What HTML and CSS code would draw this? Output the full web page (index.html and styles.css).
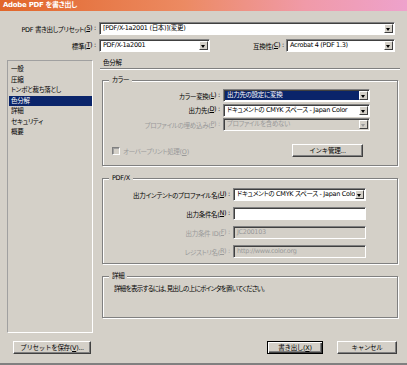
FILE: index.html
```html
<!DOCTYPE html>
<html lang="ja">

<head>
    <meta charset="UTF-8">
    <title>Adobe PDF を書き出し</title>
    <link rel="stylesheet" href="styles.css">
</head>

<body>
    <div class="dialog">
        <div class="titlebar">Adobe PDF を書き出し</div>

        <div class="top-row first">
            <span class="top-label">PDF 書き出しプリセット(<u>S</u>) :</span>
            <div class="select preset"><span class="val">[PDF/X-1a2001 (日本)](変更)</span><span class="drop"></span></div>
        </div>
        <div class="top-row">
            <span class="top-label">標準(<u>T</u>) :</span>
            <div class="select standard"><span class="val">PDF/X-1a2001</span><span class="drop"></span></div>
            <span class="compat-label">互換性(<u>C</u>) :</span>
            <div class="select compat"><span class="val">Acrobat 4 (PDF 1.3)</span><span class="drop"></span></div>
        </div>

        <div class="body">
            <ul class="nav">
                <li>一般</li>
                <li>圧縮</li>
                <li>トンボと裁ち落とし</li>
                <li class="active">色分解</li>
                <li>詳細</li>
                <li>セキュリティ</li>
                <li>概要</li>
            </ul>

            <div class="pane">
                <div class="pane-title">色分解</div>

                <!-- カラー -->
                <div class="group color">
                    <span class="legend">カラー</span>
                    <div class="field">
                        <span class="label">カラー変換(<u>L</u>) :</span>
                        <div class="select"><span class="val selected">出力先の設定に変換</span><span class="drop"></span></div>
                    </div>
                    <div class="field">
                        <span class="label">出力先(<u>D</u>) :</span>
                        <div class="select"><span class="val">ドキュメントの CMYK スペース - Japan Color</span><span class="drop"></span></div>
                    </div>
                    <div class="field disabled">
                        <span class="label">プロファイルの埋め込み(<u>P</u>) :</span>
                        <div class="select"><span class="val">プロファイルを含めない</span><span class="drop"></span></div>
                    </div>
                    <div class="check-row">
                        <span class="checkbox"></span>
                        <span class="check-label">オーバープリント処理(<u>O</u>)</span>
                        <button class="btn ink">インキ管理...</button>
                    </div>
                </div>

                <!-- PDF/X -->
                <div class="group pdfx">
                    <span class="legend">PDF/X</span>
                    <div class="field">
                        <span class="label">出力インテントのプロファイル名(<u>U</u>) :</span>
                        <div class="select"><span class="val">ドキュメントの CMYK スペース - Japan Color</span><span class="drop"></span></div>
                    </div>
                    <div class="field">
                        <span class="label">出力条件名(<u>N</u>) :</span>
                        <div class="select"><span class="val"></span></div>
                    </div>
                    <div class="field disabled">
                        <span class="label">出力条件 ID(<u>F</u>) :</span>
                        <div class="select"><span class="val">JC200103</span></div>
                    </div>
                    <div class="field disabled">
                        <span class="label">レジストリ名(<u>R</u>) :</span>
                        <div class="select"><span class="val">http://www.color.org</span></div>
                    </div>
                </div>

                <!-- 詳細 -->
                <div class="group info">
                    <span class="legend">詳細</span>
                    <p>詳細を表示するには、見出しの上にポインタを置いてください。</p>
                </div>
            </div>
        </div>

        <div class="footer">
            <button class="btn save">プリセットを保存(<u>V</u>)...</button>
            <span class="spacer"></span>
            <button class="btn default">書き出し(<u>X</u>)</button>
            <button class="btn cancel">キャンセル</button>
        </div>
    </div>
</body>

</html>
```

FILE: styles.css
```css
/* Reset */
body,
ul,
p {
    margin: 0;
    padding: 0;
}

body {
    background-color: #d4d0c8;
    color: #000;
    font-family: 'DejaVu Sans', 'Noto Sans CJK JP', sans-serif;
    font-size: 6.5px;
    letter-spacing: -0.3px;
    font-feature-settings: "palt";
}

.dialog {
    width: 407px;
    height: 365px;
    box-sizing: border-box;
    border-bottom: 2px solid #808080;
    overflow: hidden;
}

/* Title bar */
.titlebar {
    height: 11px;
    line-height: 11px;
    padding-left: 3px;
    color: #fff;
    font-size: 7px;
    font-weight: bold;
    background: linear-gradient(90deg, #e1662a 0%, #ec8a62 45%, #f09aa8 75%, #eea2cc 100%);
}

/* Preset / standard rows */
.top-row {
    display: flex;
    align-items: center;
    height: 13px;
    margin-top: 4px;
}

.top-row.first {
    margin-top: 11px;
}

.top-label,
.compat-label,
.field .label {
    display: flex;
    justify-content: flex-end;
    flex-shrink: 0;
    white-space: nowrap;
}

.top-label {
    width: 96px;
    margin-right: 3px;
}

.compat-label {
    width: 74px;
    margin-right: 2px;
}

.preset {
    width: 296px;
}

.standard {
    width: 111px;
}

.compat {
    width: 109px;
}

/* Sunken select / text box */
.select {
    display: flex;
    flex-shrink: 0;
    height: 13px;
    box-sizing: border-box;
    padding: 1px;
    background-color: #fff;
    border: 1px solid;
    border-color: #808080 #fff #fff #808080;
    box-shadow: inset 1px 1px 0 #404040;
}

.select .val {
    flex: 1;
    padding-left: 2px;
    line-height: 9px;
    white-space: nowrap;
    overflow: hidden;
}

.select .val.selected {
    background-color: #0a246a;
    color: #fff;
}

.select .drop {
    position: relative;
    width: 7px;
    background-color: #d4d0c8;
    border: 1px solid;
    border-color: #fff #404040 #404040 #fff;
}

.select .drop::after {
    content: "";
    position: absolute;
    left: 1px;
    top: 3px;
    border-left: 2.5px solid transparent;
    border-right: 2.5px solid transparent;
    border-top: 3px solid #000;
}

.disabled {
    color: #9a9a9a;
}

.disabled .select {
    background-color: #d4d0c8;
}

.disabled .select .drop::after {
    border-top-color: #9a9a9a;
}

/* Main area */
.body {
    display: flex;
    margin-top: 6px;
}

.nav {
    list-style-type: none;
    width: 86px;
    height: 273px;
    box-sizing: border-box;
    margin: 2px 0 0 7px;
    padding-top: 3px;
    border: 1px solid;
    border-color: #a0a0a0 #fff #fff #a0a0a0;
}

.nav li {
    height: 10.5px;
    line-height: 10.5px;
    margin-left: 1px;
    padding-left: 2px;
    white-space: nowrap;
}

.nav li.active {
    background-color: #0a246a;
    color: #fff;
}

.pane {
    width: 300px;
    margin-left: 7px;
}

.pane-title {
    height: 10px;
    line-height: 10px;
    padding-left: 3px;
    border-bottom: 1px solid #808080;
    box-shadow: 0 1px 0 #fff;
}

/* Etched group box */
.group {
    position: relative;
    margin: 11px 0 0 2px;
    width: 296px;
    box-sizing: border-box;
    border: 1px solid #808080;
    box-shadow: inset 1px 1px 0 #fff, 1px 1px 0 #fff;
}

.legend {
    position: absolute;
    top: -6px;
    left: 6px;
    padding: 0 3px;
    line-height: 10px;
    background-color: #d4d0c8;
}

.field {
    display: flex;
    align-items: center;
    height: 13px;
}

.field .label {
    margin-right: 3px;
}

.color {
    height: 86px;
    padding-top: 8px;
}

.color .field {
    margin-bottom: 1.5px;
}

.color .label {
    width: 117px;
}

.color .select {
    width: 147px;
}

.check-row {
    display: flex;
    align-items: center;
    margin-top: 13px;
    height: 13px;
    color: #9a9a9a;
}

.checkbox {
    width: 8px;
    height: 8px;
    box-sizing: border-box;
    margin: 0 3px 0 9px;
    border: 1px solid;
    border-color: #808080 #fff #fff #808080;
    box-shadow: inset 1px 1px 0 #a0a0a0;
}

.btn {
    height: 13px;
    box-sizing: border-box;
    padding: 0;
    font-family: inherit;
    font-size: 6.5px;
    letter-spacing: -0.3px;
    line-height: 10px;
    white-space: nowrap;
    color: #000;
    background-color: #d4d0c8;
    border: 1px solid;
    border-color: #fff #404040 #404040 #fff;
    box-shadow: inset -1px -1px 0 #808080;
}

.ink {
    width: 71px;
    margin-left: auto;
    margin-right: 34px;
}

.pdfx {
    height: 86px;
    margin-top: 12px;
    padding-top: 9px;
}

.pdfx .field {
    margin-bottom: 6px;
}

.pdfx .label {
    width: 127px;
}

.pdfx .select {
    width: 133px;
}

.info {
    height: 42px;
    margin-top: 12px;
    padding: 7px 0 0 11px;
}

.info p {
    line-height: 10px;
    letter-spacing: -0.7px;
}

/* Footer buttons */
.footer {
    display: flex;
    margin: 8px 10px 0 13px;
}

.spacer {
    flex: 1;
}

.save {
    width: 78px;
}

.default {
    width: 56px;
    border: 1px solid #000;
    box-shadow: inset 1px 1px 0 #fff, inset -1px -1px 0 #404040, inset -2px -2px 0 #808080;
}

.cancel {
    width: 60px;
    margin-left: 14px;
}
```
